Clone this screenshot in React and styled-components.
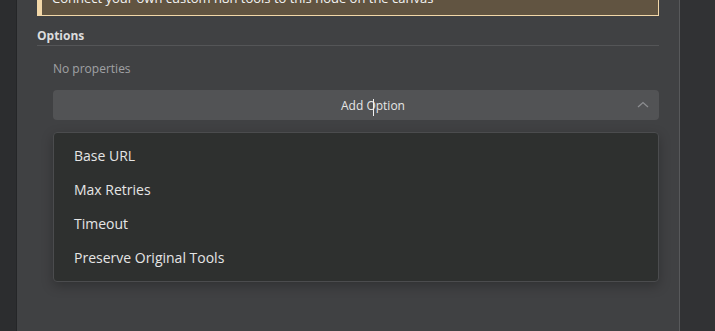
import React from 'react'
import styled, { createGlobalStyle } from 'styled-components'

const GlobalStyle = createGlobalStyle`
  *, *::before, *::after {
    box-sizing: border-box;
  }
  html, body {
    margin: 0;
    padding: 0;
    background: #2d2e30;
    font-family: 'Open Sans', 'Liberation Sans', sans-serif;
    overflow: hidden;
  }
`

const Page = styled.div`
  display: flex;
  height: 331px;
  width: 715px;
  overflow: hidden;
`

const LeftStrip = styled.div`
  width: 17px;
  background: #2c2d2f;
  border-right: 1px solid #252628;
`

const RightStrip = styled.div`
  flex: 1;
  background: #313234;
`

const Panel = styled.section`
  width: 663px;
  padding: 0 20px;
  background: #404143;
  border-right: 1px solid #58595b;
`

const Callout = styled.div`
  margin-top: -19px;
  padding: 8px 10px;
  background: #615441;
  border-left: 5px solid #f2d7a8;
  border-bottom: 1px solid #f2d7a8;
  border-right: 1px solid #f2d7a8;
  color: #f4f4f4;
  font-size: 13px;
  line-height: 18px;
`

const SectionTitle = styled.h4`
  margin: 12px 0 0;
  padding-bottom: 1px;
  font-size: 12px;
  line-height: 16px;
  font-weight: 700;
  color: #dcdcdd;
  border-bottom: 1px solid #545557;
`

const Body = styled.div`
  padding-left: 16px;
`

const Empty = styled.p`
  margin: 15px 0 0;
  font-size: 12px;
  line-height: 16px;
  color: #a0a1a5;
`

const AddButton = styled.button`
  position: relative;
  display: flex;
  align-items: center;
  justify-content: center;
  width: 100%;
  height: 30px;
  margin-top: 13px;
  padding: 0 0 0 34px;
  border: none;
  border-radius: 4px;
  background: #525355;
  color: #e6e6e6;
  font-family: inherit;
  font-size: 12px;
  svg {
    position: absolute;
    right: 10px;
    top: 11px;
  }
`

const Cursor = styled.span`
  display: inline-block;
  width: 0;
  position: relative;
  &::after {
    content: '';
    position: absolute;
    left: 7px;
    top: -11px;
    width: 1px;
    height: 17px;
    background: #f0f0f0;
  }
`

const Menu = styled.ul`
  list-style: none;
  margin: 12px 0 0;
  padding: 5px 0 7px;
  background: #2e302f;
  border: 1px solid #4b4c4e;
  border-radius: 4px;
  box-shadow: 0 4px 12px rgba(0, 0, 0, 0.25);
`

const MenuItem = styled.li`
  height: 34px;
  display: flex;
  align-items: center;
  padding-left: 20px;
  font-size: 14px;
  color: #e5e5e5;
`

const options = ['Base URL', 'Max Retries', 'Timeout', 'Preserve Original Tools']

const App = () => {
  return <>
    <GlobalStyle />
    <Page>
      <LeftStrip />
      <Panel>
        <Callout>Connect your own custom n8n tools to this node on the canvas</Callout>
        <SectionTitle>Options</SectionTitle>
        <Body>
          <Empty>No properties</Empty>
          <AddButton type='button'>
            <span>Add <Cursor />Option</span>
            <svg width='12' height='7' viewBox='0 0 12 7' fill='none'>
              <path d='M1 6L6 1.5L11 6' stroke='#8c8d90' strokeWidth='1.3' />
            </svg>
          </AddButton>
          <Menu>
            {options.map((opt) => <MenuItem key={opt}>{opt}</MenuItem>)}
          </Menu>
        </Body>
      </Panel>
      <RightStrip />
    </Page>
  </>
}

export default App
